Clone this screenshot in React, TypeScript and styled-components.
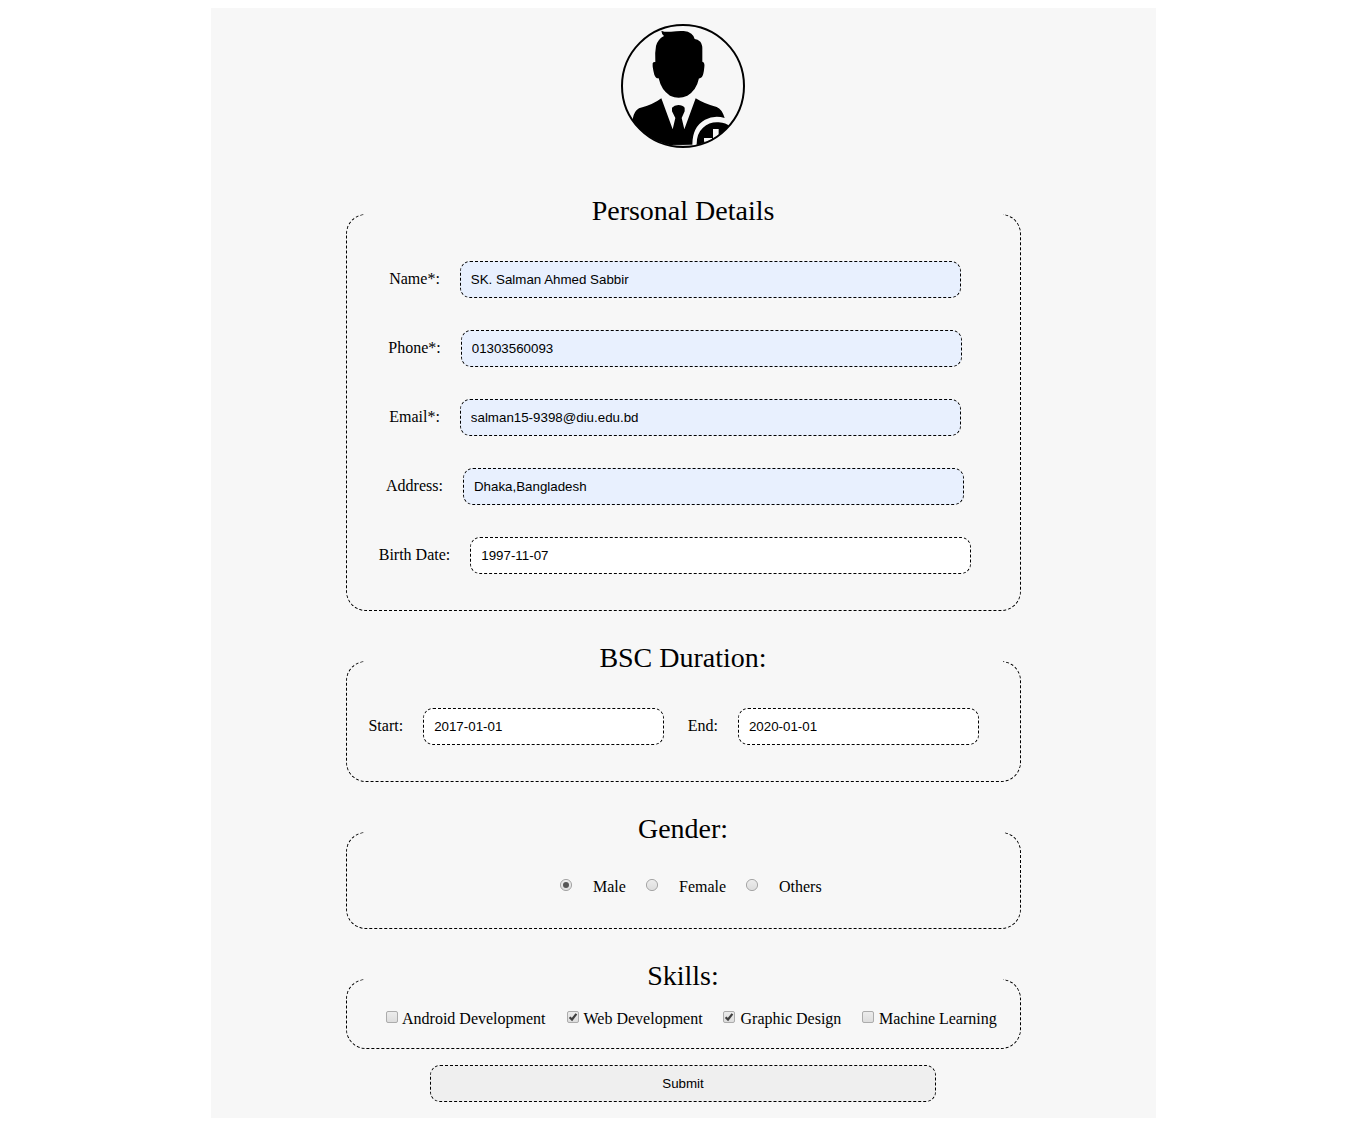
import React from "react";
import styled, { createGlobalStyle } from "styled-components";

const Global = createGlobalStyle`
  body {
    margin: 8px;
    background: #fff;
    color: #000;
    font: 16px/18px "Liberation Serif", "Times New Roman", serif;
  }
`;

const Sheet = styled.form`
  box-sizing: border-box;
  width: 945px;
  height: 1110px;
  margin: 0 auto;
  padding-top: 16px;
  background: #f7f7f7;
  display: flex;
  flex-direction: column;
  align-items: center;
`;

const Avatar = styled.svg`
  display: block;
  width: 124px;
  height: 124px;
  margin-bottom: 47px;
  flex: none;
`;

const Group = styled.fieldset<{ $height: number; $last?: boolean }>`
  box-sizing: border-box;
  flex: none;
  width: 675px;
  height: ${(p) => p.$height}px;
  min-width: 0;
  margin: 0 0 ${(p) => (p.$last ? 16 : 31)}px;
  padding: 0 17px 0 18px;
  border: 1px dashed #000;
  border-radius: 20px;
`;

const Title = styled.legend`
  box-sizing: border-box;
  width: 100%;
  padding: 0 1px 7px 0;
  text-align: center;
  font-size: 28px;
  line-height: 32px;
`;

const Rows = styled.div`
  display: flex;
  flex-direction: column;
  gap: 32px;
  padding: 27px 17px 0 0;
`;

const Row = styled.div<{ $gap?: number; $shift?: number }>`
  display: flex;
  justify-content: center;
  gap: ${(p) => p.$gap ?? 0}px;
  padding-right: ${(p) => p.$shift ?? 0}px;
`;

const Field = styled.label`
  display: flex;
  align-items: center;
  gap: 20px;
  white-space: nowrap;
`;

const Caption = styled.span`
  padding-bottom: 2px;
`;

const Input = styled.input<{ $filled?: boolean; $width?: number }>`
  box-sizing: border-box;
  width: ${(p) => p.$width ?? 501}px;
  height: 37px;
  margin: 0;
  padding: 0 10px;
  border: 1px dashed #000;
  border-radius: 10px;
  outline: none;
  background: ${(p) => (p.$filled ? "#e8f0fe" : "#fff")};
  color: #000;
  font: 13.333px "Liberation Sans", Arial, sans-serif;
`;

const Choices = styled.div<{ $columns: string; $top: number; $left: number }>`
  display: grid;
  grid-template-columns: ${(p) => p.$columns};
  padding: ${(p) => p.$top}px 0 0 ${(p) => p.$left}px;
`;

const Choice = styled.label<{ $gap: number }>`
  display: flex;
  align-items: flex-start;
  gap: ${(p) => p.$gap}px;
  white-space: nowrap;
`;

const Mark = styled.svg`
  display: block;
  width: 13px;
  height: 13px;
  margin-top: 1px;
  flex: none;
`;

const Submit = styled.button`
  box-sizing: border-box;
  flex: none;
  width: 506px;
  height: 37px;
  padding: 0;
  border: 1px dashed #000;
  border-radius: 10px;
  background: #efefef;
  color: #000;
  font: 13.333px "Liberation Sans", Arial, sans-serif;
`;

const Shade = ({ id }: { id: string }) => (
  <linearGradient id={id} x1="0" y1="0" x2="0" y2="1">
    <stop offset="0" stopColor="#ededed" />
    <stop offset="1" stopColor="#dcdcdc" />
  </linearGradient>
);

const Radio = ({ on }: { on?: boolean }) => (
  <Mark viewBox="0 0 13 13">
    <defs><Shade id="radio-shade" /></defs>
    <circle cx="6" cy="6" r="5.6" fill="url(#radio-shade)" stroke="#a6a6a6" />
    {on && <circle cx="6" cy="6" r="3" fill="#555" />}
  </Mark>
);

const Check = ({ on }: { on?: boolean }) => (
  <Mark viewBox="0 0 13 13">
    <defs><Shade id="check-shade" /></defs>
    <rect x="0.5" y="0.5" width="11" height="11" rx="1.5" fill="url(#check-shade)" stroke="#acacac" />
    {on && <path d="M2.6 6.2 5 8.5 9.4 2.8" fill="none" stroke="#404040" strokeWidth="2.2" />}
  </Mark>
);

const Portrait = () => (
  <Avatar viewBox="24 24 372 372">
    <defs>
      <clipPath id="portrait"><circle cx="210" cy="210" r="182" /></clipPath>
    </defs>
    <g clipPath="url(#portrait)">
      <path d="M145 44 Q156 49 174 47 Q196 44 212 45 Q226 46 235 53 Q243 59 245 69 Q254 70 262 77 Q269 86 268 104 L268 137 Q276 139 274 153 Q272 177 266 184 Q261 188 258 187 Q250 224 223 239 Q197 251 171 239 Q145 223 137 187 Q128 188 124 176 Q118 155 119 142 Q121 137 127 138 Q125 110 129 90 Q134 70 153 60 Q146 55 145 44Z" />
      <path d="M145 247 L179 340 L187 306 L177 286 L177 275 Q184 267 196 267 Q209 267 215 275 L215 286 L206 306 L214 340 L248 247 Q275 264 311 273 Q327 279 335 306 Q304 297 276 311 Q238 332 238 386 L180 388 L120 396 L30 340 L59 309 Q63 285 78 277 Q119 267 145 247Z" />
      <path d="M251 384 Q251 352 270 335 Q290 317 317 319 Q340 320 350 332 L360 360 L300 396 L250 396Z" />
      <path d="M300 339H317V378H300ZM273 366H297V377H273Z" fill="#f7f7f7" />
      <path d="M180 388H240" stroke="#aaa" strokeWidth="2" />
    </g>
    <circle cx="210" cy="210" r="183" fill="none" stroke="#000" strokeWidth="6" />
  </Avatar>
);

const details = [
  { label: "Name*:", value: "SK. Salman Ahmed Sabbir", filled: true },
  { label: "Phone*:", value: "01303560093", filled: true },
  { label: "Email*:", value: "salman15-9398@diu.edu.bd", filled: true },
  { label: "Address:", value: "Dhaka,Bangladesh", filled: true },
  { label: "Birth Date:", value: "1997-11-07", filled: false },
];

const skills = [
  { label: "Android Development", on: false, gap: 3.5 },
  { label: "Web Development", on: true, gap: 4 },
  { label: "Graphic Design", on: true, gap: 5 },
  { label: "Machine Learning", on: false, gap: 4.5 },
];

export default function App() {
  return (
    <>
      <Global />
      <Sheet>
        <Portrait />
        <Group $height={416}>
          <Title>Personal Details</Title>
          <Rows>
            {details.map((d) => (
              <Row key={d.label}>
                <Field>
                  <Caption>{d.label}</Caption>
                  <Input readOnly value={d.value} $filled={d.filled} />
                </Field>
              </Row>
            ))}
          </Rows>
        </Group>
        <Group $height={140}>
          <Title>BSC Duration:</Title>
          <Rows>
            <Row $gap={23.6} $shift={2.6}>
              <Field><Caption>Start:</Caption><Input readOnly value="2017-01-01" $width={241} /></Field>
              <Field><Caption>End:</Caption><Input readOnly value="2020-01-01" $width={241} /></Field>
            </Row>
          </Rows>
        </Group>
        <Group $height={116}>
          <Title>Gender:</Title>
          <Choices $columns="86px 100px auto" $top={26} $left={195}>
            <Choice $gap={20.5}><Radio on />Male</Choice>
            <Choice $gap={20.5}><Radio />Female</Choice>
            <Choice $gap={20.5}><Radio />Others</Choice>
          </Choices>
        </Group>
        <Group $height={89} $last>
          <Title>Skills:</Title>
          <Choices $columns="181px 156px 139px auto" $top={11} $left={21}>
            {skills.map((s) => (
              <Choice key={s.label} $gap={s.gap}><Check on={s.on} />{s.label}</Choice>
            ))}
          </Choices>
        </Group>
        <Submit type="button">Submit</Submit>
      </Sheet>
    </>
  );
}
